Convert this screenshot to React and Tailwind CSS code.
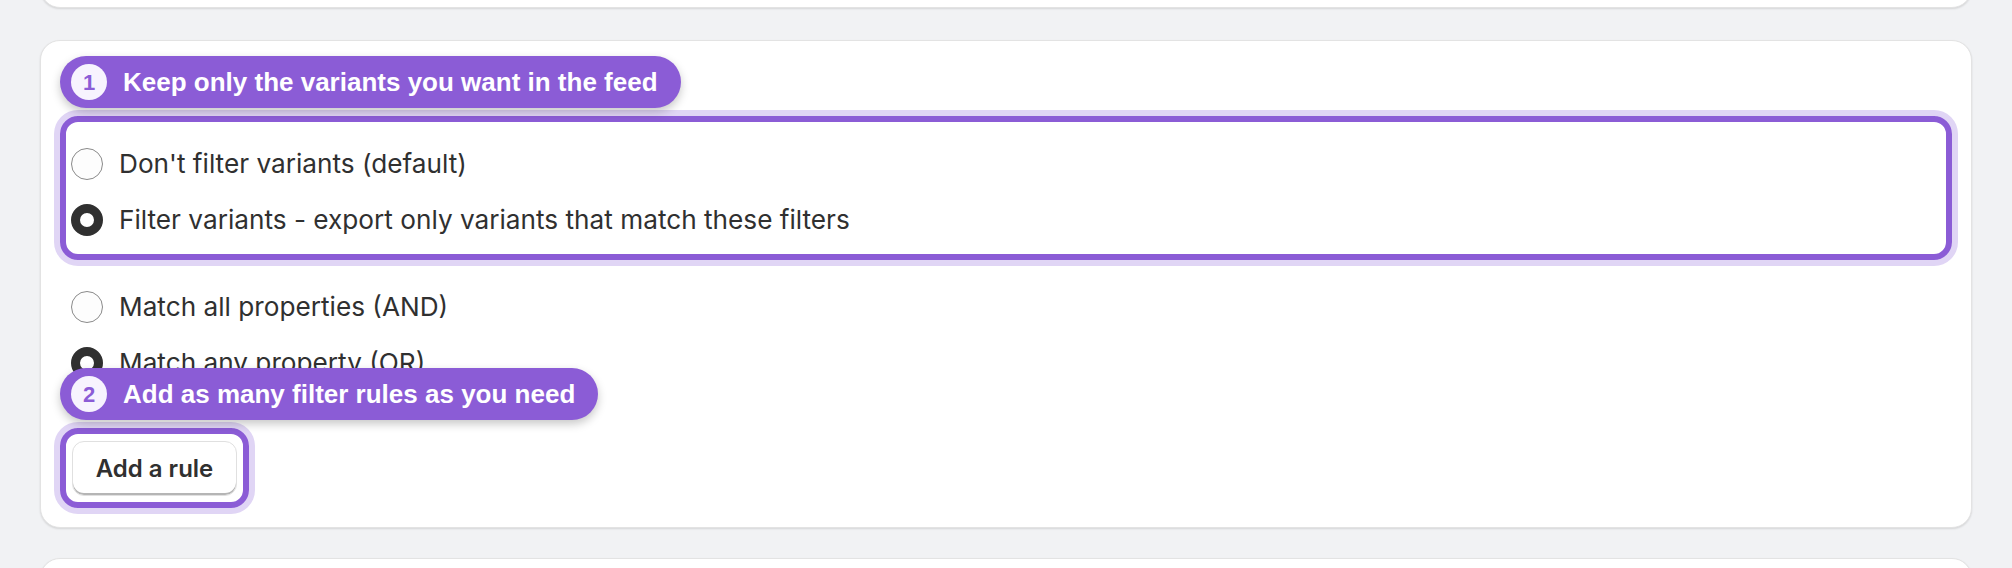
import React from "react";

function Badge({ n, children }) {
  return (
    <div className="absolute -left-[6px] bottom-[calc(100%+14px)] z-10 flex h-[52px] items-center gap-[16px] whitespace-nowrap rounded-full bg-[#8b5cd6] pl-[11px] pr-[23px] shadow-[0_4px_10px_rgba(0,0,0,0.22)] font-['Liberation_Sans',Arial,sans-serif]">
      <span className="flex h-[36px] w-[36px] items-center justify-center rounded-full bg-[#f7f3fe] text-[22px] font-bold text-[#8b5cd6]">
        {n}
      </span>
      <span className="text-[26px] font-bold text-white">{children}</span>
    </div>
  );
}

function Radio({ checked, label }) {
  return (
    <div className="flex h-[56px] items-center gap-[16px]">
      {checked ? (
        <span className="box-border h-[32px] w-[32px] shrink-0 rounded-full border-[9px] border-[#303030] bg-white" />
      ) : (
        <span className="box-border h-[32px] w-[32px] shrink-0 rounded-full border border-[#8a8a8a] bg-[#fdfdfd]" />
      )}
      <span className="text-[26.2px] text-[#303030]">{label}</span>
    </div>
  );
}

export default function App() {
  return (
    <div className="h-[568px] overflow-hidden bg-[#f1f2f4] px-[40px] font-['Inter',sans-serif]">
      <div className="-mt-[40px] h-[48px] rounded-[20px] border border-[#e3e3e3] bg-white shadow-[0_1px_2px_rgba(0,0,0,0.12)]" />

      <div className="mt-[32px] rounded-[20px] border border-[#e3e3e3] bg-white px-[19px] pb-[19px] pt-[75px] shadow-[0_1px_2px_rgba(0,0,0,0.12)]">
        <div className="relative rounded-[18px] border-[6px] border-[#8b5cd6] pb-[6px] pl-[5px] pt-[14px] shadow-[0_0_0_6px_#e0d5f5]">
          <Badge n="1">Keep only the variants you want in the feed</Badge>
          <Radio label="Don't filter variants (default)" />
          <Radio checked label="Filter variants - export only variants that match these filters" />
        </div>

        <div className="mt-[19px] pl-[11px]">
          <Radio label="Match all properties (AND)" />
          <Radio checked label="Match any property (OR)" />
        </div>

        <div className="relative mt-[37px] inline-flex rounded-[18px] border-[6px] border-[#8b5cd6] px-[6px] pb-[6px] pt-[7px] shadow-[0_0_0_6px_#e0d5f5]">
          <Badge n="2">Add as many filter rules as you need</Badge>
          <button className="flex h-[55px] w-[165px] items-center justify-center rounded-[12px] border border-[#e0e0e0] bg-white text-[24px] font-semibold text-[#303030] shadow-[inset_0_-2px_0_#b5b5b5]">
            Add a rule
          </button>
        </div>
      </div>

      <div className="mt-[30px] h-[100px] rounded-[20px] border border-[#e3e3e3] bg-white shadow-[0_1px_2px_rgba(0,0,0,0.12)]" />
    </div>
  );
}
